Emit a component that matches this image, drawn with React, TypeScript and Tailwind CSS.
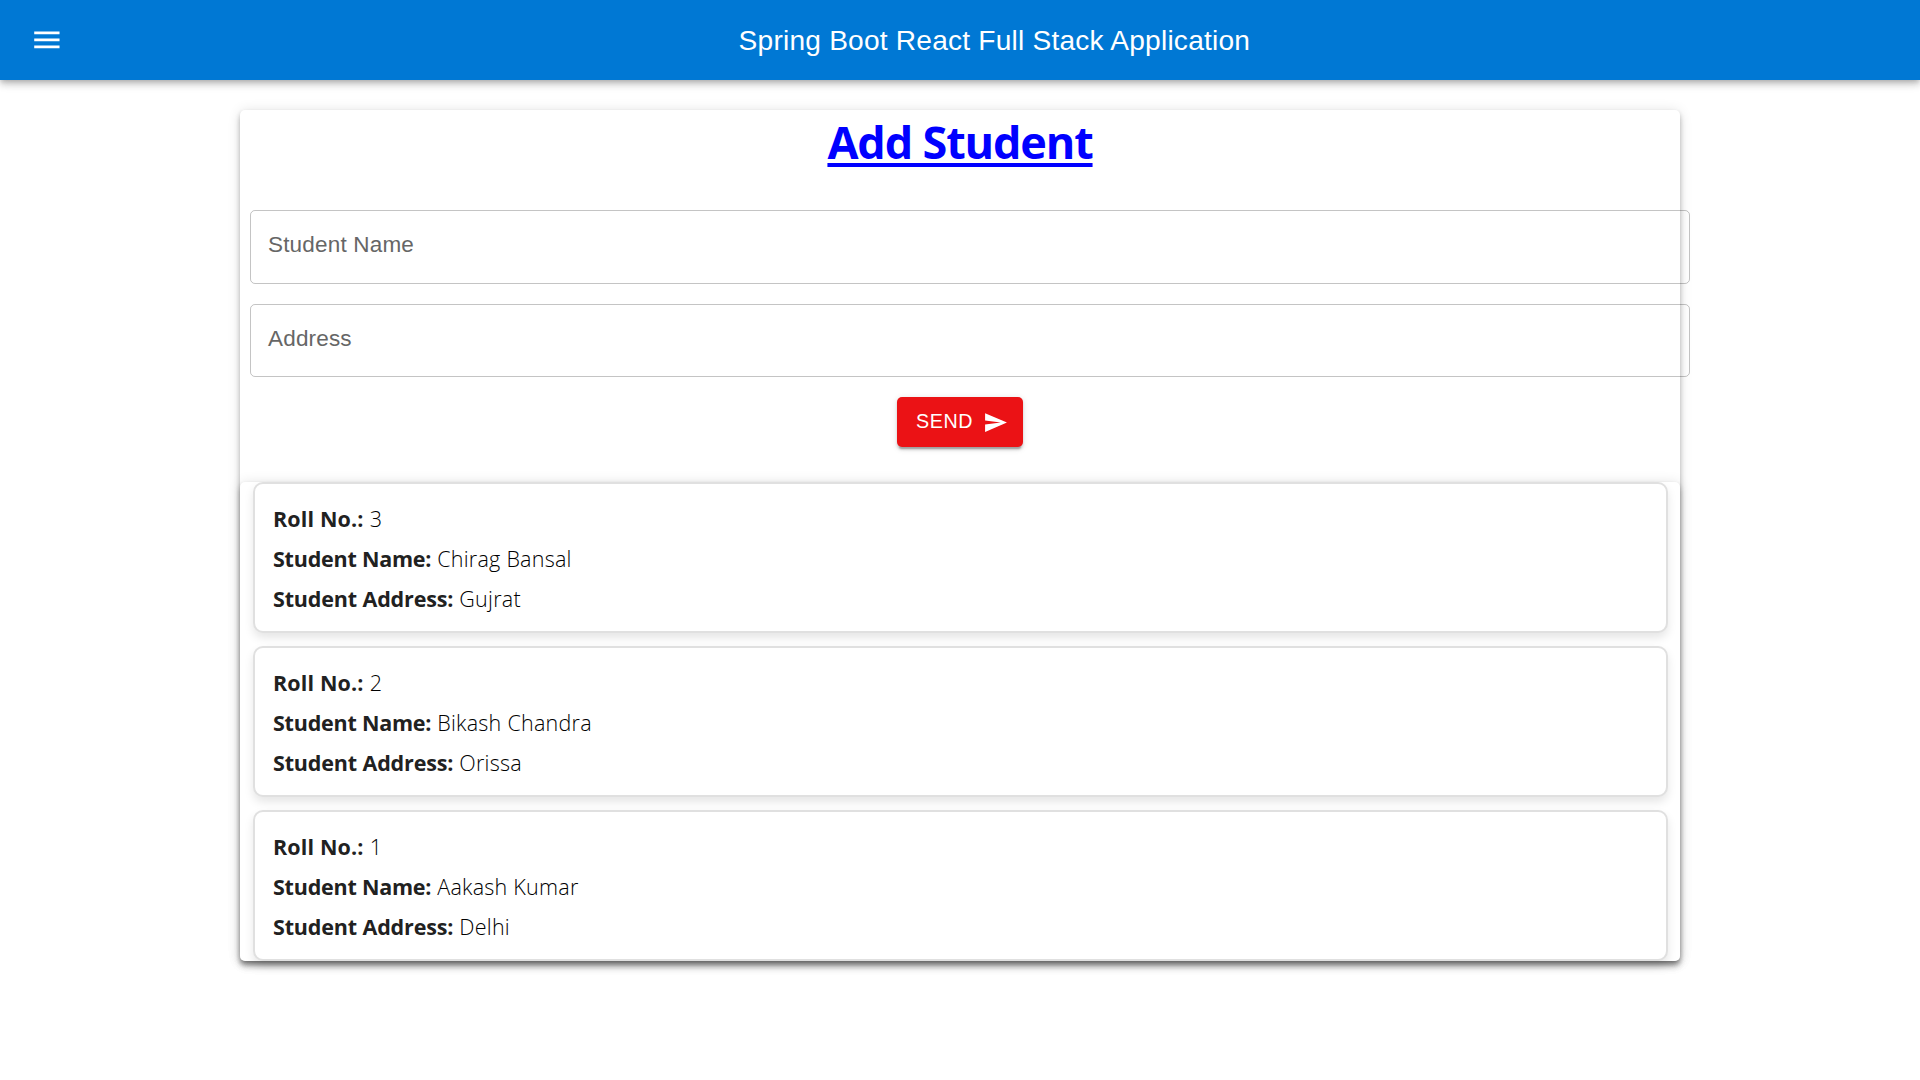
const students = [
  { roll: '3', name: 'Chirag Bansal', address: 'Gujrat' },
  { roll: '2', name: 'Bikash Chandra', address: 'Orissa' },
  { roll: '1', name: 'Aakash Kumar', address: 'Delhi' },
];

const paper =
  'rounded-[5px] bg-white shadow-[0_2.5px_5px_-1.25px_rgba(0,0,0,0.2),0_5px_6.25px_0_rgba(0,0,0,0.14),0_1.25px_12.5px_0_rgba(0,0,0,0.12)]';

function Field({ label, className }: { label: string; className: string }) {
  return (
    <div
      className={`-mr-5 ml-[10px] w-[1440px] shrink-0 self-start rounded-[5px] border border-black/[0.23] pl-[17px] pt-[20px] font-['Liberation_Sans',sans-serif] text-[22.5px] leading-[28px] tracking-[0.18px] text-[#666] ${className}`}
    >
      {label}
    </div>
  );
}

function Row({ label, value, tracking }: { label: string; value: string; tracking: string }) {
  return (
    <p className="flex h-10 items-center gap-[6px] whitespace-nowrap text-[21.5px] leading-[40px]">
      <span className={`font-bold ${tracking}`}>{label}</span>
      <span className="font-light tracking-[0.25px] text-black">{value}</span>
    </p>
  );
}

export default function App() {
  return (
    <div className="h-[1080px] overflow-hidden bg-white font-['Open_Sans','Noto_Sans',sans-serif] text-[#212121]">
      <header className="relative flex h-20 items-center bg-[#0078d4] px-[30px] text-white shadow-[0_2.5px_5px_-1.25px_rgba(0,0,0,0.2),0_5px_6.25px_0_rgba(0,0,0,0.14),0_1.25px_12.5px_0_rgba(0,0,0,0.12)]">
        <svg viewBox="0 0 24 24" fill="currentColor" className="mr-[35px] size-[33.75px]">
          <path d="M3 18h18v-2H3v2zm0-5h18v-2H3v2zm0-7v2h18V6H3z" />
        </svg>
        <h1 className="grow text-center font-['Liberation_Sans',sans-serif] text-[28.125px] leading-[45px] tracking-[0.211px]">
          Spring Boot React Full Stack Application
        </h1>
      </header>

      <main className={`mx-auto mt-[30px] h-[851px] w-[1440px] ${paper}`}>
        <div className="flex h-[372px] flex-col items-center">
          <h2 className="h-[100px] pt-px text-[45px] font-bold leading-[62px] tracking-[-1.15px] text-[#00f] underline decoration-[4px] underline-offset-[4px]">
            Add Student
          </h2>
          <Field label="Student Name" className="h-[74px]" />
          <Field label="Address" className="mt-5 h-[73px]" />
          <button className="mt-5 flex h-[50px] w-[126px] items-center rounded-[5px] bg-[#eb1215] pl-[19px] font-['Liberation_Sans',sans-serif] text-[19.69px] tracking-[0.5625px] text-white shadow-[0_3.75px_1.25px_-2.5px_rgba(0,0,0,0.2),0_2.5px_2.5px_0_rgba(0,0,0,0.14),0_1.25px_6.25px_0_rgba(0,0,0,0.12)]">
            <span>SEND</span>
            <svg viewBox="0 0 24 24" fill="currentColor" className="ml-[10px] size-[25px]">
              <path d="M2.01 21 23 12 2.01 3 2 10l15 2-15 2z" />
            </svg>
          </button>
        </div>

        <section className={`flex h-[479px] flex-col gap-[13px] pl-[13px] pr-[12px] ${paper}`}>
          {students.map((s) => (
            <article
              key={s.roll}
              className="h-[151px] rounded-[10px] border-2 border-[#e0e0e0] bg-white px-[18px] py-[15px] shadow-[0_5px_10px_rgba(0,0,0,0.1)]"
            >
              <Row label="Roll No.:" value={s.roll} tracking="tracking-[0.15px]" />
              <Row label="Student Name:" value={s.name} tracking="tracking-[-0.22px]" />
              <Row label="Student Address:" value={s.address} tracking="tracking-[-0.15px]" />
            </article>
          ))}
        </section>
      </main>
    </div>
  );
}
